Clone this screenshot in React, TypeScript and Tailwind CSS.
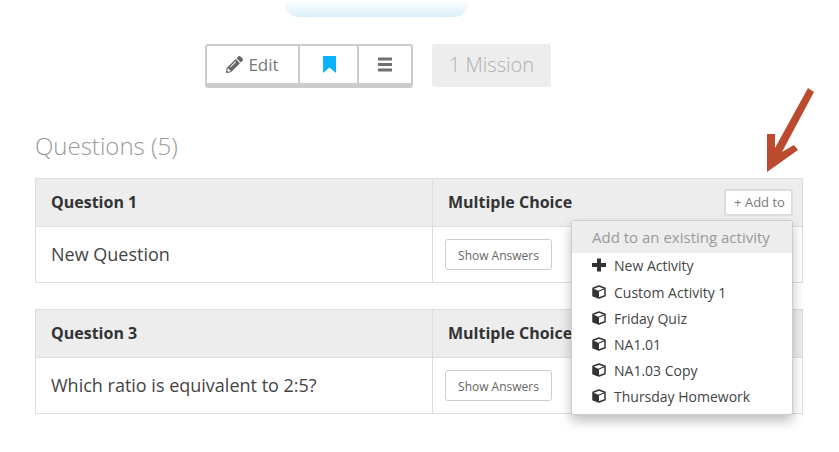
import { FaPencilAlt } from "react-icons/fa";

const activities = [
  "Custom Activity 1",
  "Friday Quiz",
  "NA1.01",
  "NA1.03 Copy",
  "Thursday Homework",
];

function CubeIcon() {
  return (
    <svg width="14" height="14" viewBox="0 0 14 14" className="shrink-0">
      <path d="M7 1L13 3.200V10.800L7 13L1 10.800V3.200Z" fill="#fff" stroke="#333" strokeWidth="1.500" strokeLinejoin="round" />
      <path d="M1 3.500L7 6V13L1 10.800Z" fill="#333" />
      <path d="M7 6L13 3.500" stroke="#333" strokeWidth="1.200" />
    </svg>
  );
}

function PlusIcon() {
  return (
    <svg width="14" height="14" viewBox="0 0 14 14" fill="#333" className="shrink-0">
      <path d="M5 0.500H9V5H14V9H9V13.500H5V9H0V5H5Z" />
    </svg>
  );
}

function ShowAnswers() {
  return (
    <button className="h-[31px] w-[107px] rounded-[3px] border border-[#ccc] bg-white pt-[2px] text-[12px] leading-[26px] text-[#666]">
      Show Answers
    </button>
  );
}

function QuestionCard({
  title,
  text,
  className,
  addTo,
}: {
  title: string;
  text: string;
  className?: string;
  addTo?: boolean;
}) {
  return (
    <div className={`w-[768px] border border-[#ddd] ${className ?? ""}`}>
      <div className="flex h-[48px] border-b border-[#ddd] bg-[#ededed] text-[16px] font-bold text-[#333]">
        <div className="flex w-[397px] items-center border-r border-[#ddd] pb-[1px] pl-[15px]">{title}</div>
        <div className="flex flex-1 items-center justify-between pb-[1px] pl-[15px] pr-[9px]">
          <span>Multiple Choice</span>
          {addTo && (
            <button className="h-[27px] w-[69px] rounded-[3px] border-2 border-[#ddd] bg-white pl-[2px] pt-[1px] text-[13px] font-normal text-[#777]">
              + Add to
            </button>
          )}
        </div>
      </div>
      <div className="flex h-[55px] text-[18px] text-[#444]">
        <div className="flex w-[397px] items-center border-r border-[#ddd] pl-[15px]">{text}</div>
        <div className="flex flex-1 items-center pl-[12px]">
          <ShowAnswers />
        </div>
      </div>
    </div>
  );
}

export default function App() {
  return (
    <div className="relative h-[452px] w-[839px] overflow-hidden bg-white font-['Open_Sans',sans-serif]">
      <div className="ml-[285px] h-[17px] w-[183px] rounded-b-[14px] bg-gradient-to-b from-white to-[#d9eff9]" />

      <div className="ml-[205px] mt-[27px] flex items-start">
        <div className="flex h-[44px] w-[208px] overflow-hidden rounded-[3px] border-2 border-b-[5px] border-[#ccc] bg-white text-[#777]">
          <div className="flex w-[93px] items-center justify-center gap-[5px] border-r-2 border-[#ccc] text-[17px]">
            <FaPencilAlt className="text-[17px] text-[#666]" />
            Edit
          </div>
          <div className="flex w-[59px] items-center justify-center border-r-2 border-[#ccc] pl-[1px]">
            <svg width="13" height="17" viewBox="0 0 13 17" fill="#0bb0ff">
              <path d="M0 0H13V17L6.500 11.500L0 17Z" />
            </svg>
          </div>
          <div className="flex flex-1 items-center justify-center">
            <svg width="14" height="15" viewBox="0 0 14 15" fill="#707070">
              <path d="M0 0.500H14V3.500H0ZM0 6H14V9H0ZM0 11.500H14V14.500H0Z" />
            </svg>
          </div>
        </div>
        <div className="ml-[19px] flex h-[43px] w-[119px] items-center justify-center rounded-[3px] bg-[#ededed] pb-[1px] text-[20px] font-light text-[#b0b0b0]">
          1 Mission
        </div>
      </div>

      <h2 className="ml-[35px] mt-[39px] h-[38px] text-[24px] font-light leading-[38px] text-[#999]">
        Questions (5)
      </h2>
      <div className="ml-[35px] mt-[13px]">
        <QuestionCard title="Question 1" text="New Question" addTo />
        <QuestionCard title="Question 3" text="Which ratio is equivalent to 2:5?" className="mt-[26px]" />
      </div>

      <div className="absolute left-[571px] top-[220px] w-[222px] rounded-[3px] border border-[#ccc] bg-white pb-[4px] shadow-[0_6px_12px_rgba(0,0,0,0.25)]">
        <div className="flex h-[32px] items-center bg-[#ededed] pl-[20px] text-[15px] text-[#999]">
          Add to an existing activity
        </div>
        <div className="mb-[1px] flex h-[26px] items-center gap-[8px] pb-[2px] pl-[20px] text-[14px] text-[#444]">
          <PlusIcon />
          New Activity
        </div>
        {activities.map((name) => (
          <div key={name} className="flex h-[26px] items-center gap-[8px] pb-[2px] pl-[20px] text-[14px] text-[#444]">
            <CubeIcon />
            {name}
          </div>
        ))}
      </div>

      <svg className="absolute left-[760px] top-[85px]" width="60" height="92" viewBox="0 0 60 92" fill="#bc4a2f">
        <path d="M48 3L54 7L22 67L34 60L38 65L7 87L7 49L15 49L15 63Z" />
      </svg>
    </div>
  );
}
